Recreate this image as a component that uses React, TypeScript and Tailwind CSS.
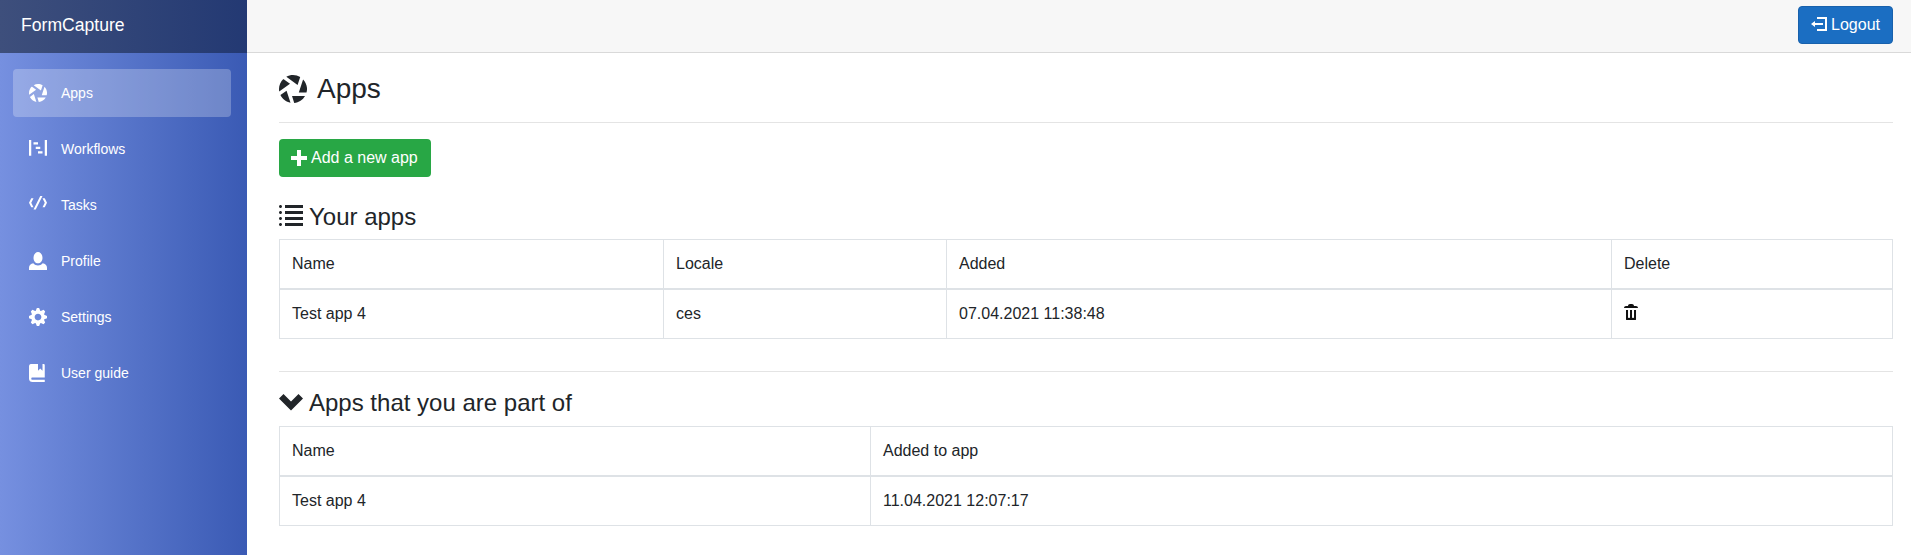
import type { ReactNode } from 'react'

const iconPaths = {
  aperture:
    'M4 0c-.69 0-1.34.19-1.91.5l3.22 2.34.75-2.25c-.6-.36-1.31-.59-2.06-.59zm-2.75 1.13c-.76.73-1.25 1.74-1.25 2.88 0 .25.02.48.06.72l3.09-2.22-1.91-1.38zm5.63.13l-1.22 3.75h2.19c.08-.32.16-.65.16-1 0-1.07-.44-2.03-1.13-2.75zm-4.72 3.22l-1.75 1.25c.55 1.13 1.6 1.99 2.88 2.22l-1.13-3.47zm1.56 1.53l.63 1.97c1.33-.12 2.46-.88 3.09-1.97h-3.72z',
  project: 'M0 0v7h1v-7h-1zm7 0v7h1v-7h-1zm-5 1v1h2v-1h-2zm1 2v1h2v-1h-2zm1 2v1h2v-1h-2z',
  code: 'M5 0l-3 6h1l3-6h-1zm-4 1l-1 2 1 2h1l-1-2 1-2h-1zm5 0l1 2-1 2h1l1-2-1-2h-1z',
  person:
    'M4 0c-1.1 0-2 1.12-2 2.5s.9 2.5 2 2.5 2-1.12 2-2.5-.9-2.5-2-2.5zm-2.09 5c-1.06.05-1.91.92-1.91 2v1h8v-1c0-1.08-.84-1.95-1.91-2-.54.61-1.28 1-2.09 1-.81 0-1.55-.39-2.09-1z',
  cog: 'M3.5 0l-.5 1.19c-.1.03-.19.08-.28.13l-1.19-.5-.72.72.5 1.19c-.05.1-.09.18-.13.28l-1.19.5v1l1.19.5c.04.1.08.18.13.28l-.5 1.19.72.72 1.19-.5c.09.04.18.09.28.13l.5 1.19h1l.5-1.19c.09-.04.19-.08.28-.13l1.19.5.72-.72-.5-1.19c.04-.09.09-.19.13-.28l1.19-.5v-1l-1.19-.5c-.03-.09-.08-.19-.13-.28l.5-1.19-.72-.72-1.19.5c-.09-.04-.19-.09-.28-.13l-.5-1.19h-1zm.5 2.5c.83 0 1.5.67 1.5 1.5s-.67 1.5-1.5 1.5-1.5-.67-1.5-1.5.67-1.5 1.5-1.5z',
  book: 'M1 0c-.07 0-.13.01-.19.03-.39.08-.7.39-.78.78-.03.06-.03.12-.03.19v5.5c0 .83.67 1.5 1.5 1.5h5.5v-1h-5.5c-.28 0-.5-.22-.5-.5s.22-.5.5-.5h5.5v-5.5c0-.28-.22-.5-.5-.5h-.5v3l-1-1-1 1v-3h-3z',
  plus: 'M3 0v3h-3v2h3v3h2v-3h3v-2h-3v-3h-2z',
  list: 'M.5 0c-.28 0-.5.22-.5.5s.22.5.5.5.5-.22.5-.5-.22-.5-.5-.5zm1.5 0v1h6v-1h-6zm-1.5 2c-.28 0-.5.22-.5.5s.22.5.5.5.5-.22.5-.5-.22-.5-.5-.5zm1.5 0v1h6v-1h-6zm-1.5 2c-.28 0-.5.22-.5.5s.22.5.5.5.5-.22.5-.5-.22-.5-.5-.5zm1.5 0v1h6v-1h-6zm-1.5 2c-.28 0-.5.22-.5.5s.22.5.5.5.5-.22.5-.5-.22-.5-.5-.5zm1.5 0v1h6v-1h-6z',
  chevron: 'M1.5 1l-1.5 1.5 4 4 4-4-1.5-1.5-2.5 2.5-2.5-2.5z',
  logout: 'M3 0v1h4v5h-4v1h5v-7h-5zm-1 2l-2 1.5 2 1.5v-1h4v-1h-4v-1z',
  trash:
    'M3 0c-.55 0-1 .45-1 1h-1c-.55 0-1 .45-1 1h7c0-.55-.45-1-1-1h-1c0-.55-.45-1-1-1h-1zm-2 3v4.81c0 .11.08.19.19.19h4.63c.11 0 .19-.08.19-.19v-4.81h-1v3.5c0 .28-.22.5-.5.5s-.5-.22-.5-.5v-3.5h-1v3.5c0 .28-.22.5-.5.5s-.5-.22-.5-.5v-3.5h-1z',
}

function Icon({ name, className }: { name: keyof typeof iconPaths; className: string }) {
  return (
    <svg viewBox="0 0 8 8" className={className} fill="currentColor">
      <path d={iconPaths[name]} />
    </svg>
  )
}

const navItems: { label: string; icon: keyof typeof iconPaths }[] = [
  { label: 'Apps', icon: 'aperture' },
  { label: 'Workflows', icon: 'project' },
  { label: 'Tasks', icon: 'code' },
  { label: 'Profile', icon: 'person' },
  { label: 'Settings', icon: 'cog' },
  { label: 'User guide', icon: 'book' },
]

function Sidebar() {
  return (
    <aside className="flex w-[247px] shrink-0 flex-col bg-gradient-to-r from-[#7690e0] to-[#3a5ab4] text-white">
      <div className="flex h-[53px] items-center bg-gradient-to-r from-[#3e4f7c] to-[#233973] pb-[2px] pl-[21px] text-[17.6px]">
        FormCapture
      </div>
      <nav className="flex flex-col gap-2 pl-[13px] pr-4 pt-4">
        {navItems.map((item, i) => (
          <div
            key={item.label}
            className={`flex h-12 items-center gap-[14px] rounded pl-4 text-[14px] ${i === 0 ? 'bg-white/25' : ''}`}
          >
            <Icon name={item.icon} className="h-[18px] w-[18px]" />
            {item.label}
          </div>
        ))}
      </nav>
    </aside>
  )
}

function Cell({ children, head, width }: { children: ReactNode; head?: boolean; width?: string }) {
  return (
    <td
      className={`border border-[#dee2e6] p-3 align-top leading-6 ${head ? 'border-b-2' : ''} ${width ?? ''}`}
    >
      {children}
    </td>
  )
}

export default function App() {
  return (
    <div className="flex h-[555px] overflow-hidden bg-white font-['Liberation_Sans',Arial,sans-serif] text-[16px] text-[#212529]">
      <Sidebar />
      <div className="flex min-w-0 flex-1 flex-col">
        <header className="flex h-[53px] shrink-0 items-start justify-end border-b border-[#d9d9d9] bg-[#f7f7f7] pr-[18px] pt-1.5">
          <button className="flex h-[38px] items-center gap-1 rounded border border-[#1861ac] bg-[#1b6ec2] px-3 text-white">
            <Icon name="logout" className="h-4 w-4" />
            Logout
          </button>
        </header>
        <main className="flex flex-col pl-8 pr-[18px]">
          <h1 className="mt-[19px] flex h-[34px] items-center gap-[10px] text-[28px] leading-[34px]">
            <Icon name="aperture" className="h-7 w-7" />
            Apps
          </h1>
          <hr className="mt-4 border-[#e4e4e4]" />
          <button className="mt-4 flex h-[38px] w-[152px] items-center gap-1 rounded bg-[#28a745] pl-3 text-white">
            <Icon name="plus" className="h-4 w-4" />
            Add a new app
          </button>
          <h4 className="mt-[25px] flex h-[29px] items-center gap-[6px] text-[24px] leading-[29px]">
            <Icon name="list" className="h-6 w-6" />
            Your apps
          </h4>
          <table className="mt-2 w-full table-fixed border-collapse">
            <tbody>
              <tr>
                <Cell head width="w-[384px]">Name</Cell>
                <Cell head width="w-[283px]">Locale</Cell>
                <Cell head width="w-[665px]">Added</Cell>
                <Cell head>Delete</Cell>
              </tr>
              <tr>
                <Cell>Test app 4</Cell>
                <Cell>ces</Cell>
                <Cell>07.04.2021 11:38:48</Cell>
                <Cell>
                  <Icon name="trash" className="mt-0.5 h-4 w-4 text-[#111]" />
                </Cell>
              </tr>
            </tbody>
          </table>
          <hr className="mt-8 border-[#e4e4e4]" />
          <h4 className="mt-4 flex h-[29px] items-center gap-[6px] text-[24px] leading-[29px]">
            <Icon name="chevron" className="h-6 w-6" />
            Apps that you are part of
          </h4>
          <table className="mt-[9px] w-full table-fixed border-collapse">
            <tbody>
              <tr>
                <Cell head width="w-[591px]">Name</Cell>
                <Cell head>Added to app</Cell>
              </tr>
              <tr>
                <Cell>Test app 4</Cell>
                <Cell>11.04.2021 12:07:17</Cell>
              </tr>
            </tbody>
          </table>
        </main>
      </div>
    </div>
  )
}
